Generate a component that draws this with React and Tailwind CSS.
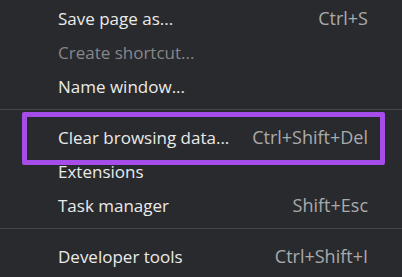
import React from "react";

function Row({ label, shortcut, disabled, highlight }) {
  return (
    <div className="relative flex h-[34px] shrink-0 items-center justify-between pl-[58px] pr-[34px] pt-[4px]">
      <span className={"text-[17px] " + (disabled ? "text-[#86878a]" : "text-[#eaeaea]")}>{label}</span>
      {shortcut ? <span className="text-[18px] text-[#a9aaac]">{shortcut}</span> : null}
      {highlight ? (
        <div className="pointer-events-none absolute left-[22px] top-[-6px] h-[53px] w-[363px] rounded-[2px] border-[5px] border-[#a64ce9]" />
      ) : null}
    </div>
  );
}

function Sep() {
  return (
    <div className="shrink-0 py-[8px]">
      <div className="h-px bg-[#45464a]" />
    </div>
  );
}

export default function App() {
  return (
    <div
      className="flex h-[277px] w-[402px] flex-col overflow-hidden bg-[#292a2d] leading-none"
      style={{ fontFamily: '"Open Sans", "Noto Sans", sans-serif' }}
    >
      <div className="-mt-px flex flex-col">
        <Row label="Save page as..." shortcut="Ctrl+S" />
        <Row label="Create shortcut..." disabled />
        <Row label="Name window..." />
        <Sep />
        <Row label="Clear browsing data..." shortcut="Ctrl+Shift+Del" highlight />
        <Row label="Extensions" />
        <Row label="Task manager" shortcut="Shift+Esc" />
        <Sep />
        <Row label="Developer tools" shortcut="Ctrl+Shift+I" />
      </div>
    </div>
  );
}
